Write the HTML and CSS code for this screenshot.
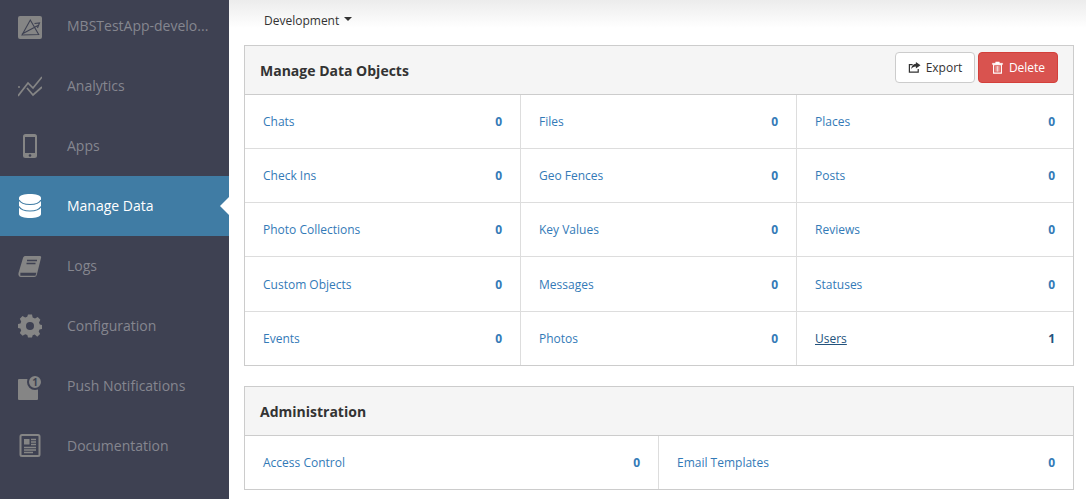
FILE: index.html
```html
<!DOCTYPE html>
<html lang="en">
<head>
<meta charset="UTF-8">
<meta name="viewport" content="width=device-width, initial-scale=1.0">
<title>Manage Data</title>
<link rel="stylesheet" href="styles.css">
</head>
<body>
<div class="layout">
  <nav class="sidebar">
    <a class="nav-item">
      <svg class="nav-icon app-icon" viewBox="0 0 24 24"><rect x="0" y="0" width="24" height="23" rx="2" fill="#858585"/><path d="M4 19 12.300 4l8.400 14.500zM4 18 20 9.500M16.500 7.500l5-.5-2 5" fill="none" stroke="#3e4152" stroke-width="1.100"/></svg>
      <span class="nav-label">MBSTestApp-develo...</span>
    </a>
    <a class="nav-item">
      <svg class="nav-icon" viewBox="0 0 24 24"><path d="M0 22 10 9l5 5 9-11M9 14l6 7 9-8" fill="none" stroke="#858585" stroke-width="1.700"/><circle cx="1" cy="13" r="1" fill="#858585"/></svg>
      <span class="nav-label">Analytics</span>
    </a>
    <a class="nav-item">
      <svg class="nav-icon" viewBox="0 0 24 24"><rect x="5" y="0" width="14" height="24" rx="2.500" fill="#858585"/><rect x="7" y="3" width="10" height="16" fill="#3e4152"/><circle cx="12" cy="21.500" r="1.300" fill="#3e4152"/></svg>
      <span class="nav-label">Apps</span>
    </a>
    <a class="nav-item active">
      <svg class="nav-icon" viewBox="0 0 24 24"><path d="M1 4c0-5.300 22-5.300 22 0v16c0 5.300-22 5.300-22 0z" fill="#fff"/><path d="M1 6c3 6 19 6 22 0M1 12.500c3 6 19 6 22 0" fill="none" stroke="#407ca4" stroke-width="1.200"/></svg>
      <span class="nav-label">Manage Data</span>
    </a>
    <a class="nav-item">
      <svg class="nav-icon" viewBox="0 0 24 24"><path d="M7 2h15c1 0 1.500 1 1 2l-4 16c-.5 2-1 3-3 3H3c-2 0-3-2-2.500-4L5 4c.3-1 1-2 2-2z" fill="#858585"/><path d="M3 19.500h14.500L17 21H3zM9 6.500h10M8.500 9.500h9" stroke="#3e4152" stroke-width="1.300" fill="none"/></svg>
      <span class="nav-label">Logs</span>
    </a>
    <a class="nav-item">
      <svg class="nav-icon" viewBox="0 0 24 24"><path d="M10 1h4l.7 3 2.300 1 2.700-1.500 2.700 2.800L21 8.900l.8 2.100 2.200.5v4l-2.500.5-.8 2 1.400 2.600-2.800 2.700L16.700 21l-2 .8L14 24h-4l-.7-2.500-2-.8L4.500 22.300 1.800 19.600 3.200 17l-.8-2L0 14.500v-4l2.500-.5.700-2L1.800 5.300 4.500 2.600 7.200 4l2-.8z" fill="#858585" transform="translate(0 -.5)"/><circle cx="12" cy="12" r="4" fill="#3e4152"/></svg>
      <span class="nav-label">Configuration</span>
    </a>
    <a class="nav-item">
      <span class="nav-icon push-icon"><span class="push-badge">1</span></span>
      <span class="nav-label">Push Notifications</span>
    </a>
    <a class="nav-item">
      <svg class="nav-icon" viewBox="0 0 24 24"><rect x="2.500" y="1" width="19" height="21" rx="1.500" fill="none" stroke="#858585" stroke-width="2"/><rect x="6" y="5" width="5.500" height="5.500" fill="#858585"/><path d="M13 5.500H18M13 8H18M13 10.500H18M6 13.500h12M6 16h12M6 18.500h9" stroke="#858585" stroke-width="1.400"/></svg>
      <span class="nav-label">Documentation</span>
    </a>
  </nav>

  <main class="content">
    <div class="env-bar">
      <span class="env-name">Development</span><span class="caret"></span>
    </div>

    <section class="panel">
      <header class="panel-head">
        <h2>Manage Data Objects</h2>
        <div class="actions">
          <button class="btn">
            <svg class="btn-icon" viewBox="0 0 14 14"><path d="M11 8.500V12H1.500V4H5" fill="none" stroke="#333" stroke-width="1.300"/><path d="M8.500 1 13.500 4.500 8.500 8V6C6 6 4.500 7 3.500 9 3.500 5.500 5.500 3.200 8.500 3z" fill="#333"/></svg>
            Export
          </button>
          <button class="btn btn-danger">
            <svg class="btn-icon" viewBox="0 0 14 14"><path d="M1.500 2.500h11v1.200h-11zM5 2.500V1h4v1.500" fill="#fff" stroke="#fff" stroke-width=".5"/><path d="M2.800 4h8.400v9H2.800z" fill="none" stroke="#fff" stroke-width="1.200"/><path d="M5.500 5.500v6M7 5.500v6M8.500 5.500v6" stroke="#fff" stroke-width=".8"/></svg>
            Delete
          </button>
        </div>
      </header>
      <div class="cells cols-3">
        <a class="cell"><span class="cell-name">Chats</span><b class="count">0</b></a>
        <a class="cell"><span class="cell-name">Files</span><b class="count">0</b></a>
        <a class="cell"><span class="cell-name">Places</span><b class="count">0</b></a>
        <a class="cell"><span class="cell-name">Check Ins</span><b class="count">0</b></a>
        <a class="cell"><span class="cell-name">Geo Fences</span><b class="count">0</b></a>
        <a class="cell"><span class="cell-name">Posts</span><b class="count">0</b></a>
        <a class="cell"><span class="cell-name">Photo Collections</span><b class="count">0</b></a>
        <a class="cell"><span class="cell-name">Key Values</span><b class="count">0</b></a>
        <a class="cell"><span class="cell-name">Reviews</span><b class="count">0</b></a>
        <a class="cell tall"><span class="cell-name">Custom Objects</span><b class="count">0</b></a>
        <a class="cell tall"><span class="cell-name">Messages</span><b class="count">0</b></a>
        <a class="cell tall"><span class="cell-name">Statuses</span><b class="count">0</b></a>
        <a class="cell last"><span class="cell-name">Events</span><b class="count">0</b></a>
        <a class="cell last"><span class="cell-name">Photos</span><b class="count">0</b></a>
        <a class="cell last hovered"><span class="cell-name">Users</span><b class="count">1</b></a>
      </div>
    </section>

    <section class="panel">
      <header class="panel-head">
        <h2>Administration</h2>
      </header>
      <div class="cells cols-2">
        <a class="cell last"><span class="cell-name">Access Control</span><b class="count">0</b></a>
        <a class="cell last"><span class="cell-name">Email Templates</span><b class="count">0</b></a>
      </div>
    </section>
  </main>
</div>
</body>
</html>
```

FILE: styles.css
```css
html, body {
  height: 100%;
}
body {
  margin: 0;
  font-family: "Open Sans", sans-serif;
  font-size: 13px;
  color: #333;
  background-color: #fff;
  overflow: hidden;
}
.layout {
  display: flex;
  height: 499px;
}

/* sidebar */
.sidebar {
  width: 229px;
  flex: none;
  background-color: #3e4152;
  overflow: hidden;
}
.nav-item {
  display: flex;
  align-items: center;
  height: 60px;
  padding-left: 18px;
  color: #85868f;
  font-size: 14px;
}
.nav-item:first-child {
  margin-top: -4px;
}
.nav-label {
  margin-bottom: 2px;
}
.nav-icon {
  width: 24px;
  height: 24px;
  flex: none;
  margin-right: 25px;
}
.app-icon {
  margin-top: 4px;
}
.nav-item.active {
  position: relative;
  background-color: #407ca4;
  color: #fff;
}
.nav-item.active::after {
  content: "";
  position: absolute;
  right: 0;
  top: 21px;
  border: 9px solid transparent;
  border-left-width: 0;
  border-right-color: #fff;
}
.push-icon {
  position: relative;
  background-color: #858585;
  width: 20px;
  height: 21px;
  margin-top: 6px;
  margin-right: 29px;
  border-radius: 1px;
}
.push-badge {
  position: absolute;
  top: -5px;
  right: -5px;
  width: 12px;
  height: 12px;
  border: 2px solid #3e4152;
  border-radius: 50%;
  background-color: #858585;
  color: #3e4152;
  font-size: 10px;
  font-weight: 700;
  line-height: 12px;
  text-align: center;
}

/* main area */
.content {
  flex: 1;
  min-width: 0;
  padding: 0 12px 0 15px;
  background: linear-gradient(#ececec, #fff 28px);
}
.env-bar {
  display: flex;
  align-items: center;
  height: 45px;
  padding: 0 0 5px 20px;
  box-sizing: border-box;
  font-size: 12px;
}
.caret {
  margin-left: 5px;
  margin-top: -2px;
  border: 4px solid transparent;
  border-top-color: #333;
  border-bottom-width: 0;
}
.panel {
  border: 1px solid #ccc;
  margin-bottom: 20px;
  background-color: #fff;
}
.panel-head {
  display: flex;
  align-items: center;
  justify-content: space-between;
  height: 48px;
  padding: 0 15px;
  border-bottom: 1px solid #ccc;
  background-color: #f5f5f5;
}
.panel-head h2 {
  margin: 0;
  font-size: 14px;
  font-weight: 700;
  color: #333;
}
.actions {
  display: flex;
  gap: 3px;
  margin-bottom: 5px;
}
.btn {
  display: flex;
  align-items: center;
  justify-content: center;
  gap: 5px;
  width: 80px;
  height: 31px;
  padding: 0;
  border: 1px solid #ccc;
  border-radius: 4px;
  background-color: #fff;
  color: #333;
  font-family: inherit;
  font-size: 12px;
}
.btn-danger {
  background-color: #d9534f;
  border-color: #d43f3a;
  color: #fff;
}
.btn-icon {
  width: 13px;
  height: 13px;
}
.cells {
  display: grid;
}
.cols-3 {
  grid-template-columns: repeat(3, 1fr);
}
.cols-2 {
  grid-template-columns: 414px 1fr;
}
.cell {
  display: flex;
  align-items: center;
  justify-content: space-between;
  height: 53px;
  padding: 0 18px;
  border-right: 1px solid #ddd;
  border-bottom: 1px solid #ddd;
  color: #337ab7;
  font-size: 12px;
}
.cell.tall {
  height: 54px;
}
.cell:nth-child(3n),
.cols-2 .cell:last-child {
  border-right: 0;
}
.cell.last {
  border-bottom: 0;
}
.count {
  font-weight: 700;
}
.hovered {
  color: #23527c;
}
.hovered .cell-name {
  text-decoration: underline;
}
```
